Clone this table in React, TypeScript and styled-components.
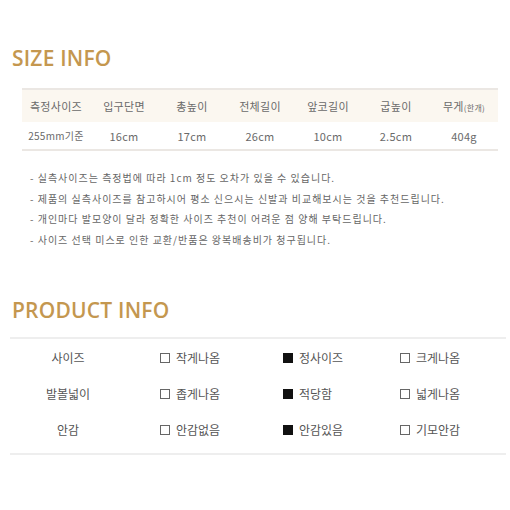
import styled, { createGlobalStyle } from "styled-components";

const GlobalStyle = createGlobalStyle`
  body {
    margin: 0;
    background: #fff;
    font-family: "Noto Sans CJK KR", "Noto Sans", sans-serif;
  }
`;

const sizeHead = ["측정사이즈", "입구단면", "총높이", "전체길이", "앞코길이", "굽높이"];
const sizeData = ["255mm기준", "16cm", "17cm", "26cm", "10cm", "2.5cm", "404g"];

const notes = [
  "- 실측사이즈는 측정법에 따라 1cm 정도 오차가 있을 수 있습니다.",
  "- 제품의 실측사이즈를 참고하시어 평소 신으시는 신발과 비교해보시는 것을 추천드립니다.",
  "- 개인마다 발모양이 달라 정확한 사이즈 추천이 어려운 점 양해 부탁드립니다.",
  "- 사이즈 선택 미스로 인한 교환/반품은 왕복배송비가 청구됩니다.",
];

const productRows = [
  { label: "사이즈", options: ["작게나옴", "정사이즈", "크게나옴"], checked: 1 },
  { label: "발볼넓이", options: ["좁게나옴", "적당함", "넓게나옴"], checked: 1 },
  { label: "안감", options: ["안감없음", "안감있음", "기모안감"], checked: 1 },
];

const App = () => {
  return (
    <SPage>
      <GlobalStyle />
      <STitle>SIZE INFO</STitle>
      <SSizeTable>
        <SHeadRow>
          {sizeHead.map((h) => (
            <SHeadCell key={h}>{h}</SHeadCell>
          ))}
          <SHeadCell>
            무게<SSmall>(한개)</SSmall>
          </SHeadCell>
        </SHeadRow>
        <SDataRow>
          {sizeData.map((d, i) => (
            <SDataCell key={i} $first={i === 0}>
              {d}
            </SDataCell>
          ))}
        </SDataRow>
      </SSizeTable>

      <SNotes>
        {notes.map((n) => (
          <li key={n}>{n}</li>
        ))}
      </SNotes>

      <STitle $product>PRODUCT INFO</STitle>
      <SProductTable>
        {productRows.map((row) => (
          <SProductRow key={row.label}>
            <SLabel>{row.label}</SLabel>
            {row.options.map((o, i) => (
              <SOption key={o}>
                <SCheck $on={i === row.checked} />
                {o}
              </SOption>
            ))}
          </SProductRow>
        ))}
      </SProductTable>
    </SPage>
  );
};

const SPage = styled.div`
  width: 510px;
  height: 510px;
  padding-top: 44px;
  box-sizing: border-box;
`;

const STitle = styled.h2<{ $product?: boolean }>`
  margin: ${(p) => (p.$product ? "45px" : "0")} 0 0 12px;
  font-family: "Open Sans", sans-serif;
  font-weight: 600;
  font-size: 21px;
  line-height: 28px;
  letter-spacing: 0.2px;
  color: #c4974f;
`;

const SSizeTable = styled.div`
  margin: 16px 12px 0 22px;
  border-top: 2px solid #ebe7e3;
  border-bottom: 2px solid #ebe7e3;
`;

const SHeadRow = styled.div`
  display: grid;
  grid-template-columns: repeat(7, 1fr);
  height: 32px;
  align-items: center;
  background: #fbf7f0;
`;

const SDataRow = styled.div`
  display: grid;
  grid-template-columns: repeat(7, 1fr);
  height: 27px;
  align-items: center;
`;

const SHeadCell = styled.div`
  text-align: center;
  font-size: 11px;
  color: #6a6a6a;
  letter-spacing: 0.3px;
`;

const SSmall = styled.span`
  font-size: 8px;
`;

const SDataCell = styled.div<{ $first?: boolean }>`
  text-align: center;
  font-size: ${(p) => (p.$first ? "10px" : "11px")};
  color: #6a6a6a;
  letter-spacing: 0.3px;
`;

const SNotes = styled.ul`
  list-style: none;
  margin: 17px 0 0 30px;
  padding: 0;
  font-size: 10px;
  line-height: 20.7px;
  letter-spacing: 1px;
  color: #666;
`;

const SProductTable = styled.div`
  margin: 13px 4px 0 10px;
  padding: 1px 0 5px;
  border-top: 2px solid #eeeeee;
  border-bottom: 2px solid #eeeeee;
`;

const SProductRow = styled.div`
  display: grid;
  grid-template-columns: 116px 123px 117px 1fr;
  height: 36px;
  align-items: center;
`;

const SLabel = styled.div`
  text-align: center;
  font-size: 12px;
  color: #555;
`;

const SOption = styled.div`
  display: flex;
  align-items: center;
  gap: 6px;
  padding-left: 34px;
  font-size: 12px;
  color: #555;
`;

const SCheck = styled.span<{ $on?: boolean }>`
  width: 10px;
  height: 10px;
  box-sizing: border-box;
  border: 1px solid ${(p) => (p.$on ? "#111" : "#666")};
  background: ${(p) => (p.$on ? "#111" : "#fff")};
`;

export default App;
